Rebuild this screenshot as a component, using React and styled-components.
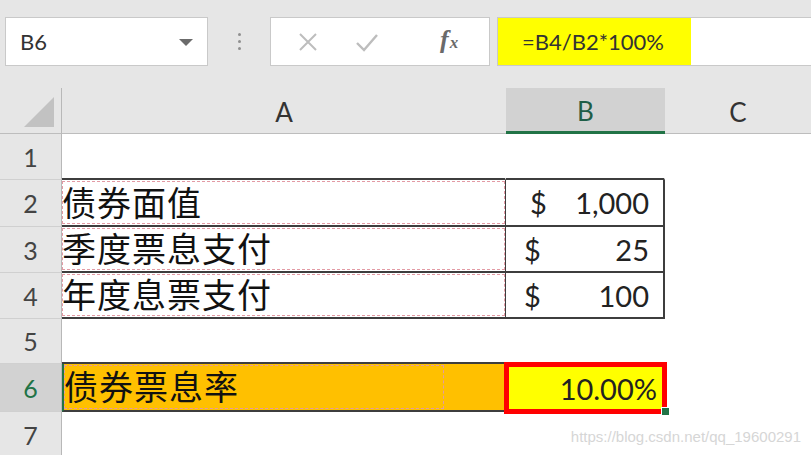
import React from "react";
import styled, { createGlobalStyle } from "styled-components";

const Global = createGlobalStyle`
  html, body {
    margin: 0;
    padding: 0;
    background: #ffffff;
    overflow: hidden;
  }
  body {
    font-family: Lato, "Noto Sans CJK SC", sans-serif;
  }
`;

const Page = styled.div`
  width: 811px;
  height: 455px;
  position: relative;
  overflow: hidden;
`;

const Toolbar = styled.div`
  height: 88px;
  box-sizing: border-box;
  padding: 17px 0 0 5px;
  background: #e6e6e6;
  display: flex;
  align-items: flex-start;
`;

const Box = styled.div`
  height: 49px;
  box-sizing: border-box;
  background: #ffffff;
  border: 1px solid #c9c9c9;
  display: flex;
  align-items: center;
`;

const NameBox = styled(Box)`
  width: 203px;
  padding: 0 14px 0 14px;
  justify-content: space-between;
  font-size: 22px;
  color: #333;
`;

const Caret = styled.span`
  width: 0;
  height: 0;
  border-left: 7px solid transparent;
  border-right: 7px solid transparent;
  border-top: 7px solid #6b6b6b;
  margin-top: 2px;
`;

const Dots = styled.div`
  width: 62px;
  height: 49px;
  display: flex;
  flex-direction: column;
  align-items: center;
  justify-content: center;
  gap: 4px;
  span {
    width: 3px;
    height: 3px;
    border-radius: 50%;
    background: #8f8f8f;
  }
`;

const FuncBox = styled(Box)`
  width: 220px;
  padding-left: 25px;
  gap: 34px;
`;

const Fx = styled.span`
  font-family: "Liberation Serif", serif;
  font-style: italic;
  font-weight: bold;
  font-size: 26px;
  color: #6a6a6a;
  margin-left: 26px;
  margin-top: -4px;
  sub {
    font-size: 17px;
    vertical-align: baseline;
    margin-left: 1px;
  }
`;

const FormulaBox = styled(Box)`
  margin-left: 7px;
  flex: 1;
  border-right: none;
`;

const FormulaText = styled.span`
  background: #ffff00;
  height: 100%;
  display: flex;
  align-items: center;
  padding: 0 6px 0 24px;
  width: 193px;
  box-sizing: border-box;
  font-size: 22px;
  color: #333;
`;

const Grid = styled.div`
  display: grid;
  grid-template-columns: 62px 444px 159px 1fr;
  grid-template-rows: 46px 46px 47px 46px 46px 45px 48px 46px;
`;

const Corner = styled.div`
  background: #e6e6e6;
  border-right: 1px solid #b8b8b8;
  border-bottom: 1px solid #bdbdbd;
  position: relative;
  &::after {
    content: "";
    position: absolute;
    right: 7px;
    bottom: 6px;
    width: 0;
    height: 0;
    border-left: 30px solid transparent;
    border-bottom: 30px solid #c2c2c2;
  }
`;

const ColHead = styled.div`
  background: ${(p) => (p.$active ? "#d2d2d2" : "#e6e6e6")};
  border-bottom: ${(p) => (p.$active ? "3px solid #217346" : "1px solid #bdbdbd")};
  display: flex;
  align-items: center;
  justify-content: center;
  font-size: 26px;
  color: ${(p) => (p.$active ? "#1f5e47" : "#333")};
  padding-top: 2px;
`;

const RowHead = styled.div`
  background: ${(p) => (p.$active ? "#d2d2d2" : "#e6e6e6")};
  border-right: 1px solid #b8b8b8;
  border-bottom: 1px solid #d0d0d0;
  display: flex;
  align-items: center;
  justify-content: center;
  font-size: 25px;
  color: ${(p) => (p.$active ? "#217346" : "#444")};
`;

const Cell = styled.div`
  position: relative;
  box-sizing: border-box;
  background: ${(p) => p.$bg || "#ffffff"};
  border-right: ${(p) => p.$right || "1px solid transparent"};
  border-bottom: ${(p) => p.$bottom || "1px solid transparent"};
  border-left: ${(p) => p.$left || "none"};
  display: flex;
  align-items: center;
  color: #111;
`;

const LabelCell = styled(Cell)`
  font-family: "Noto Sans CJK SC", sans-serif;
  font-size: 34px;
  letter-spacing: 1px;
  line-height: 1;
  padding-bottom: 2px;
  &::before {
    content: "";
    position: absolute;
    left: 0;
    top: 1px;
    bottom: 1px;
    right: ${(p) => p.$dashRight || "0px"};
    border: 1px dashed #e39aa4;
    pointer-events: none;
  }
`;

const MoneyCell = styled(Cell)`
  justify-content: space-between;
  padding: 0 14px 0 ${(p) => p.$indent || "18px"};
  font-size: 29px;
  color: #222;
`;

const RateCell = styled(Cell)`
  justify-content: flex-end;
  padding-right: 8px;
  font-size: 29px;
  color: #222;
  box-shadow: 0 0 0 2px #ff0000, inset 0 0 0 3px #ff0000;
  z-index: 1;
`;

const Handle = styled.span`
  position: absolute;
  right: -5px;
  bottom: -4px;
  width: 7px;
  height: 7px;
  background: #217346;
  border: 1px solid #ffffff;
`;

const Watermark = styled.div`
  position: absolute;
  right: 10px;
  bottom: 10px;
  font-family: "Liberation Sans", Arial, sans-serif;
  font-size: 15px;
  color: #d6d6d6;
`;

const dark = "2px solid #3d3d3d";

const money = [
  ["债券面值", "1,000", "24px"],
  ["季度票息支付", "25", "18px"],
  ["年度息票支付", "100", "18px"],
];

export default function App() {
  return (
    <Page>
      <Global />
      <Toolbar>
        <NameBox>
          B6
          <Caret />
        </NameBox>
        <Dots>
          <span />
          <span />
          <span />
        </Dots>
        <FuncBox>
          <svg width="24" height="24" viewBox="0 0 24 24">
            <path d="M4 4 L20 20 M20 4 L4 20" stroke="#bdbdbd" strokeWidth="2" fill="none" />
          </svg>
          <svg width="26" height="24" viewBox="0 0 26 24">
            <path d="M3 13 L10 20 L23 5" stroke="#bdbdbd" strokeWidth="2.4" fill="none" />
          </svg>
          <Fx>
            f<sub>x</sub>
          </Fx>
        </FuncBox>
        <FormulaBox>
          <FormulaText>=B4/B2*100%</FormulaText>
        </FormulaBox>
      </Toolbar>
      <Grid>
        <Corner />
        <ColHead>A</ColHead>
        <ColHead $active>B</ColHead>
        <ColHead>C</ColHead>

        <RowHead>1</RowHead>
        <Cell $bottom={dark} />
        <Cell $bottom={dark} />
        <Cell />

        {money.map(([label, value, indent], i) => (
          <React.Fragment key={label}>
            <RowHead>{i + 2}</RowHead>
            <LabelCell $right="1px solid #3d3d3d" $bottom={dark}>
              {label}
            </LabelCell>
            <MoneyCell $right={dark} $bottom={dark} $indent={indent}>
              <span>$</span>
              <span>{value}</span>
            </MoneyCell>
            <Cell />
          </React.Fragment>
        ))}

        <RowHead>5</RowHead>
        <Cell $bottom={dark} />
        <Cell />
        <Cell />

        <RowHead $active>6</RowHead>
        <LabelCell
          $bg="#ffc000"
          $right="none"
          $bottom={dark}
          $left="2px solid #217346"
          $dashRight="62px"
        >
          债券票息率
        </LabelCell>
        <RateCell $bg="#ffff00" $right="none" $bottom="none">
          10.00%
          <Handle />
        </RateCell>
        <Cell />

        <RowHead>7</RowHead>
        <Cell />
        <Cell />
        <Cell />
      </Grid>
      <Watermark>https://blog.csdn.net/qq_19600291</Watermark>
    </Page>
  );
}
